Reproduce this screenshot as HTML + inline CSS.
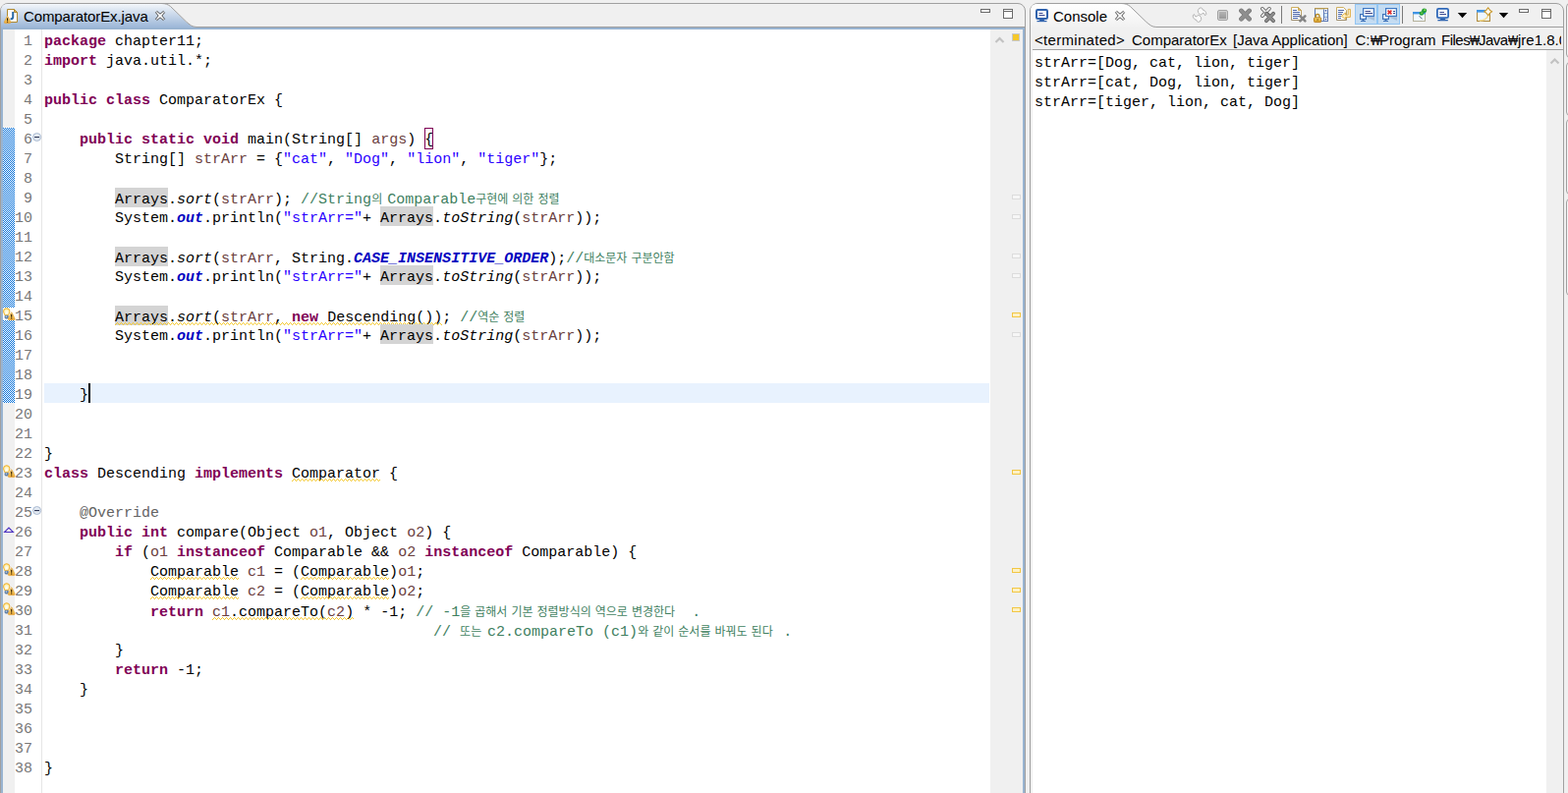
<!DOCTYPE html>
<html><head><meta charset="utf-8"><title>ComparatorEx</title>
<style>
*{box-sizing:border-box}
html,body{margin:0;padding:0}
body{width:1596px;height:807px;overflow:hidden;position:relative;background:#f0f0f0;font-family:"Liberation Sans",sans-serif}
.abs{position:absolute}
/* panels */
#edp{position:absolute;left:0;top:3px;width:1044px;height:820px;border:1px solid #a0a0a0;border-radius:8px 8px 0 0;background:#f0f0f0}
#cop{position:absolute;left:1048px;top:3px;width:544px;height:820px;border:1px solid #a0a0a0;border-radius:8px 8px 0 0;background:#f0f0f0}
#rp1{position:absolute;left:1594px;top:3px;width:20px;height:56px;border:1px solid #a0a0a0;border-radius:4px;background:#f7f7f7}
#rp2{position:absolute;left:1594px;top:63px;width:20px;height:55px;border:1px solid #a0a0a0;border-radius:4px;background:#f7f7f7}
#rp3{position:absolute;left:1594px;top:121px;width:20px;height:77px;border:1px solid #a0a0a0;border-radius:4px;background:#f7f7f7}
#rp4{position:absolute;left:1594px;top:202px;width:20px;height:99px;border:1px solid #a0a0a0;border-radius:4px;background:#f7f7f7}
#rng{background:repeating-conic-gradient(#0a72da 0% 25%, #fff 0% 50%) 1px 0/2px 2px}
/* editor */
#edarea{position:absolute;left:3px;top:30px;width:1038px;height:777px;background:#fff}
.ln,.cl{position:absolute;font-family:"Liberation Mono",monospace;font-size:15px;line-height:20px;height:20px;white-space:pre}
.ln{left:15px;width:18px;text-align:right;color:#787878}
.cl{left:45px;color:#000;z-index:1}
.k{color:#7f0055;font-weight:bold}
.s{color:#2a00ff}
.v{color:#6a3e3e}
.c{color:#3f7f5f}
.i{font-style:italic}
.f{color:#0000c0;font-style:italic;font-weight:bold}
.a{color:#646464}
.m{position:relative;display:inline-block;height:20px}
.m::before{content:"";position:absolute;left:0;right:0;top:-3px;height:20px;background:#d4d4d4;z-index:-1}
.br{position:relative;display:inline-block;height:20px}
.br::before{content:"";position:absolute;left:0;right:0;top:-3px;height:20px;border:1px solid #7f0055}
.w{position:relative;display:inline-block;height:20px}
.sq{position:absolute;left:0;top:14px}
.hg{display:inline-block;position:relative;height:20px;line-height:20px;font-family:"Liberation Sans","Noto Sans CJK KR",sans-serif;font-size:12px;word-spacing:0.7px;white-space:pre;color:#3f7f5f;overflow:visible}
.co{position:absolute;left:1053px;font-family:"Liberation Mono",monospace;font-size:15px;line-height:20px;white-space:pre;color:#000}
.ov{position:absolute;left:1030px;width:9px;height:5px;border:1px solid #dcdcdc;background:#f6f6f6}
.ov.y{border-color:#f2c744;background:#fdf1c4}
.won{transform:scaleX(0.72);transform-origin:0 0}
.tt{position:absolute;white-space:pre;color:#000}
</style></head>
<body>
<!-- panel outlines -->
<div id="edp"></div>
<div id="cop"></div>
<div id="rp1"></div><div id="rp2"></div><div id="rp3"></div><div id="rp4"></div>

<!-- editor tab strip + borders -->
<svg class="abs" style="left:0;top:0" width="1046" height="32" viewBox="0 0 1046 32">
  <defs>
    <linearGradient id="tg" x1="0" y1="0" x2="0" y2="1">
      <stop offset="0" stop-color="#f3f6fa"/><stop offset="0.35" stop-color="#d3dfee"/><stop offset="1" stop-color="#9cb7d8"/>
    </linearGradient>
  </defs>
  <path d="M1,28 L1,11 Q1,4 8,4 L164.4,4 C168.5,4 171,5 173.5,7 L189.5,22.5 C193,25.5 195.5,27.5 200,27.5 L200,28 Z" fill="url(#tg)"/>
  <path d="M164.4,3.5 C168.5,3.5 171,4.5 173.5,6.5 L189.5,22 C193,25 195.5,27.5 200,27.5 L1043,27.5" fill="none" stroke="#9e9e9e" stroke-width="1"/>
  <rect x="1" y="28" width="1042" height="2" fill="#99b4d1"/>
</svg>
<div class="abs" style="left:1px;top:28px;width:2px;height:779px;background:#99b4d1"></div>
<div class="abs" style="left:1041px;top:28px;width:2px;height:779px;background:#99b4d1"></div>

<!-- editor area -->
<div id="edarea"></div>
<div class="abs" style="left:3px;top:30px;width:12px;height:777px;background:#f0f0f0"></div>
<div class="abs" style="left:42px;top:30px;width:1px;height:777px;background:#e6e6e6"></div>
<div class="abs" style="left:1008px;top:30px;width:33px;height:777px;background:#f0f0f0"></div>
<!-- range indicator -->
<div class="abs" id="rng" style="left:3px;top:130px;width:12px;height:280px"></div>
<!-- current line -->
<div class="abs" style="left:45px;top:390px;width:962px;height:20px;background:#e8f2fe"></div>
<div class="abs" style="left:90px;top:390px;width:2px;height:20px;background:#000"></div>

<div class="ln" style="top:33px">1</div>
<div class="cl" style="top:33px"><span class="k">package</span> chapter11;</div>
<div class="ln" style="top:53px">2</div>
<div class="cl" style="top:53px"><span class="k">import</span> java.util.*;</div>
<div class="ln" style="top:73px">3</div>
<div class="ln" style="top:93px">4</div>
<div class="cl" style="top:93px"><span class="k">public</span> <span class="k">class</span> ComparatorEx {</div>
<div class="ln" style="top:113px">5</div>
<div class="ln" style="top:133px">6</div>
<div class="cl" style="top:133px">    <span class="k">public</span> <span class="k">static</span> <span class="k">void</span> main(String[] <span class="v">args</span>) <span class="br">{</span></div>
<div class="ln" style="top:153px">7</div>
<div class="cl" style="top:153px">        String[] <span class="v">strArr</span> = {<span class="s">"cat"</span>, <span class="s">"Dog"</span>, <span class="s">"lion"</span>, <span class="s">"tiger"</span>};</div>
<div class="ln" style="top:173px">8</div>
<div class="ln" style="top:193px">9</div>
<div class="cl" style="top:193px">        <span class="m">Arrays</span>.<span class="i">sort</span>(<span class="v">strArr</span>); <span class="c">//String<span class="hg" style="width:16px">의 </span>Comparable<span class="hg" style="width:92px">구현에 의한 정렬</span></span></div>
<div class="ln" style="top:213px">10</div>
<div class="cl" style="top:213px">        System.<span class="f">out</span>.println(<span class="s">"strArr="</span>+ <span class="m">Arrays</span>.<span class="i">toString</span>(<span class="v">strArr</span>));</div>
<div class="ln" style="top:233px">11</div>
<div class="ln" style="top:253px">12</div>
<div class="cl" style="top:253px">        <span class="m">Arrays</span>.<span class="i">sort</span>(<span class="v">strArr</span>, String.<span class="f">CASE_INSENSITIVE_ORDER</span>);<span class="c">//<span class="hg" style="width:100px">대소문자 구분안함</span></span></div>
<div class="ln" style="top:273px">13</div>
<div class="cl" style="top:273px">        System.<span class="f">out</span>.println(<span class="s">"strArr="</span>+ <span class="m">Arrays</span>.<span class="i">toString</span>(<span class="v">strArr</span>));</div>
<div class="ln" style="top:293px">14</div>
<div class="ln" style="top:313px">15</div>
<div class="cl" style="top:313px">        <span class="w"><span class="m">Arrays</span>.<span class="i">sort</span>(<span class="v">strArr</span>, <span class="k">new</span> Descending())<svg class="sq" width="333" height="3"><rect width="333" height="3" fill="url(#sqp)"/></svg></span>; <span class="c">//<span class="hg" style="width:52px">역순 정렬</span></span></div>
<div class="ln" style="top:333px">16</div>
<div class="cl" style="top:333px">        System.<span class="f">out</span>.println(<span class="s">"strArr="</span>+ <span class="m">Arrays</span>.<span class="i">toString</span>(<span class="v">strArr</span>));</div>
<div class="ln" style="top:353px">17</div>
<div class="ln" style="top:373px">18</div>
<div class="ln" style="top:393px">19</div>
<div class="cl" style="top:393px">    }</div>
<div class="ln" style="top:413px">20</div>
<div class="ln" style="top:433px">21</div>
<div class="ln" style="top:453px">22</div>
<div class="cl" style="top:453px">}</div>
<div class="ln" style="top:473px">23</div>
<div class="cl" style="top:473px"><span class="k">class</span> Descending <span class="k">implements</span> <span class="w">Comparator<svg class="sq" width="90" height="3"><rect width="90" height="3" fill="url(#sqp)"/></svg></span> {</div>
<div class="ln" style="top:493px">24</div>
<div class="ln" style="top:513px">25</div>
<div class="cl" style="top:513px">    <span class="a">@Override</span></div>
<div class="ln" style="top:533px">26</div>
<div class="cl" style="top:533px">    <span class="k">public</span> <span class="k">int</span> compare(Object <span class="v">o1</span>, Object <span class="v">o2</span>) {</div>
<div class="ln" style="top:553px">27</div>
<div class="cl" style="top:553px">        <span class="k">if</span> (<span class="v">o1</span> <span class="k">instanceof</span> Comparable &amp;&amp; <span class="v">o2</span> <span class="k">instanceof</span> Comparable) {</div>
<div class="ln" style="top:573px">28</div>
<div class="cl" style="top:573px">            <span class="w">Comparable<svg class="sq" width="90" height="3"><rect width="90" height="3" fill="url(#sqp)"/></svg></span> <span class="v">c1</span> = (<span class="w">Comparable<svg class="sq" width="90" height="3"><rect width="90" height="3" fill="url(#sqp)"/></svg></span>)<span class="v">o1</span>;</div>
<div class="ln" style="top:593px">29</div>
<div class="cl" style="top:593px">            <span class="w">Comparable<svg class="sq" width="90" height="3"><rect width="90" height="3" fill="url(#sqp)"/></svg></span> <span class="v">c2</span> = (<span class="w">Comparable<svg class="sq" width="90" height="3"><rect width="90" height="3" fill="url(#sqp)"/></svg></span>)<span class="v">o2</span>;</div>
<div class="ln" style="top:613px">30</div>
<div class="cl" style="top:613px">            <span class="k">return</span> <span class="w"><span class="v">c1</span>.compareTo(<span class="v">c2</span>)<svg class="sq" width="144" height="3"><rect width="144" height="3" fill="url(#sqp)"/></svg></span> * -1; <span class="c">// -1<span class="hg" style="width:236px">을 곱해서 기본 정렬방식의 역으로 변경한다</span>.</span></div>
<div class="ln" style="top:633px">31</div>
<div class="cl" style="top:633px">                                            <span class="c">// <span class="hg" style="width:28px">또는 </span>c2.compareTo (c1)<span class="hg" style="width:148px">와 같이 순서를 바꿔도 된다</span>.</span></div>
<div class="ln" style="top:653px">32</div>
<div class="cl" style="top:653px">        }</div>
<div class="ln" style="top:673px">33</div>
<div class="cl" style="top:673px">        <span class="k">return</span> -1;</div>
<div class="ln" style="top:693px">34</div>
<div class="cl" style="top:693px">    }</div>
<div class="ln" style="top:713px">35</div>
<div class="ln" style="top:733px">36</div>
<div class="ln" style="top:753px">37</div>
<div class="ln" style="top:773px">38</div>
<div class="cl" style="top:773px">}</div>
<div class="ov" style="top:198px"></div>
<div class="ov" style="top:218px"></div>
<div class="ov" style="top:258px"></div>
<div class="ov" style="top:278px"></div>
<div class="ov" style="top:338px"></div>
<div class="ov y" style="top:318px"></div>
<div class="ov y" style="top:478px"></div>
<div class="ov y" style="top:578px"></div>
<div class="ov y" style="top:598px"></div>
<div class="ov y" style="top:618px"></div>

<!-- ===== editor tab contents ===== -->
<svg class="abs" style="left:3px;top:8px" width="17" height="17" viewBox="0 0 17 17">
  <defs>
    <linearGradient id="wg" x1="0" y1="0" x2="0" y2="1"><stop offset="0" stop-color="#fde9a8"/><stop offset="0.6" stop-color="#f7c95a"/><stop offset="1" stop-color="#e8a030"/></linearGradient>
  </defs>
  <path d="M4.5,1.5 H11.5 L14.5,4.5 V14.5 H4.5 Z" fill="#fbfcff" stroke="#b08a30"/>
  <path d="M11.5,1.5 V4.5 H14.5 Z" fill="#e0b860" stroke="#b08a30" stroke-linejoin="round"/>
  <path d="M10.2,4 V9.2 Q10.2,11.6 7.6,11.2" fill="none" stroke="#2a6aa6" stroke-width="2"/>
  <path d="M4.2,8.7 Q4.6,8 5,8.7 L7.7,14.2 Q8.1,15.6 6.8,15.6 H2.4 Q1.1,15.6 1.5,14.2 Z" fill="url(#wg)" stroke="#e3a33a" stroke-width="0.8"/>
  <rect x="4.05" y="10.3" width="1.1" height="2.7" fill="#2a1a08"/><rect x="4.05" y="13.6" width="1.1" height="1.1" fill="#2a1a08"/>
</svg>
<div class="tt" id="t1" style="left:24px;top:7px;font-size:15px;line-height:20px;letter-spacing:-0.1px">ComparatorEx.java</div>
<svg class="abs" style="left:157px;top:10px" width="12" height="12" viewBox="-1 -1 12 12">
  <path d="M0.5,1.8 L1.8,0.5 L5,3.2 L8.2,0.5 L9.5,1.8 L6.8,5 L9.5,8.2 L8.2,9.5 L5,6.8 L1.8,9.5 L0.5,8.2 L3.2,5 Z" fill="#fff" stroke="#4c4c4c" stroke-width="1" stroke-linejoin="round"/>
</svg>
<!-- editor min / max -->
<svg class="abs" style="left:997px;top:8px" width="36" height="12" viewBox="0 0 36 12">
  <rect x="1.5" y="1.5" width="9" height="3" fill="#fff" stroke="#6a6a6a"/>
  <rect x="24.5" y="1.5" width="9" height="9" fill="#fff" stroke="#6a6a6a"/>
  <rect x="24.5" y="1.5" width="9" height="2" fill="#fff" stroke="#6a6a6a"/>
</svg>
<!-- editor scrollbar chevron + overview square -->
<svg class="abs" style="left:1008px;top:30px" width="33" height="20" viewBox="0 0 33 20">
  <path d="M5.5,13 L9.5,9 L13.5,13" fill="none" stroke="#c2c2c2" stroke-width="2.2"/>
  <rect x="22.5" y="4.5" width="7" height="7" fill="#f5c82a" stroke="#c8c8c8"/>
</svg>
<!-- ===== console tab strip ===== -->
<svg class="abs" style="left:1048px;top:0" width="548" height="52" viewBox="1048 0 548 52">
  <defs>
    <linearGradient id="cg" x1="0" y1="0" x2="0" y2="1"><stop offset="0" stop-color="#ffffff"/><stop offset="1" stop-color="#f1f1f1"/></linearGradient>
  </defs>
  <path d="M1049,28 L1049,11 Q1049,4 1056,4 L1141.3,4 C1145.4,4 1147.9,5 1150.4,7 L1166.4,22.5 C1169.9,25.5 1172.4,27.5 1176.9,27.5 L1176.9,28 Z" fill="url(#cg)"/>
  <path d="M1141.3,3.5 C1145.4,3.5 1147.9,4.5 1150.4,6.5 L1166.4,22 C1169.9,25 1172.4,27.5 1176.9,27.5 L1591,27.5" fill="none" stroke="#9e9e9e" stroke-width="1"/>
  <rect x="1051" y="50" width="540" height="1" fill="#a0a0a0"/>
</svg>
<div class="abs" style="left:1051px;top:51px;width:523px;height:756px;background:#fff"></div>
<div class="abs" style="left:1574px;top:51px;width:17px;height:756px;background:#f0f0f0"></div>
<svg class="abs" style="left:1574px;top:51px" width="17" height="20" viewBox="0 0 17 20">
  <path d="M4.5,13.5 L8.5,9.5 L12.5,13.5" fill="none" stroke="#c2c2c2" stroke-width="2.2"/>
</svg>
<!-- console icon -->
<svg class="abs" style="left:1053px;top:8px" width="16" height="16" viewBox="0 0 16 16">
  <rect x="2" y="2" width="11" height="9" rx="1.2" fill="#fafdff" stroke="#2f62ad" stroke-width="2"/>
  <rect x="4.5" y="5" width="4" height="1" fill="#3a4890"/><rect x="4.5" y="7" width="6" height="1" fill="#3a4890"/>
  <path d="M5.5,12 H9.5 L10.5,13 H4.5 Z" fill="#2f62ad"/><rect x="2.5" y="13" width="10" height="1.2" fill="#2f62ad"/>
</svg>
<div class="tt" id="t2" style="left:1072px;top:7px;font-size:15px;line-height:20px">Console</div>
<svg class="abs" style="left:1134px;top:10px" width="12" height="12" viewBox="-1 -1 12 12">
  <path d="M0.5,1.8 L1.8,0.5 L5,3.2 L8.2,0.5 L9.5,1.8 L6.8,5 L9.5,8.2 L8.2,9.5 L5,6.8 L1.8,9.5 L0.5,8.2 L3.2,5 Z" fill="#fff" stroke="#4c4c4c" stroke-width="1" stroke-linejoin="round"/>
</svg>
<div class="abs" id="t3" style="left:1051px;top:30px;width:538px;height:20px;overflow:hidden"><span class="tt" id="g0" style="left:2.0px;top:1px;font-size:15px;line-height:20px;letter-spacing:0.3px">&lt;terminated&gt;</span><span class="tt" id="g1" style="left:101.0px;top:1px;font-size:15px;line-height:20px">ComparatorEx</span><span class="tt" id="g2" style="left:204.0px;top:1px;font-size:15px;line-height:20px">[Java Application]</span><span class="tt" id="g3" style="left:328.4px;top:1px;font-size:15px;line-height:20px">C:</span><span class="tt won" id="g4" style="left:343.6px;top:1px;font-size:15px;line-height:20px">&#8361;</span><span class="tt" id="g5" style="left:353.0px;top:1px;font-size:15px;line-height:20px">Program</span><span class="tt" id="g6" style="left:416.0px;top:1px;font-size:15px;line-height:20px;letter-spacing:-0.5px">Files</span><span class="tt won" id="g7" style="left:444.7px;top:1px;font-size:15px;line-height:20px">&#8361;</span><span class="tt" id="g8" style="left:454.0px;top:1px;font-size:15px;line-height:20px;letter-spacing:-0.5px">Java</span><span class="tt won" id="g9" style="left:484.3px;top:1px;font-size:15px;line-height:20px">&#8361;</span><span class="tt" id="g10" style="left:494.0px;top:1px;font-size:15px;line-height:20px">jre1.8.0_121</span></div>
<div class="co" style="top:55px">strArr=[Dog, cat, lion, tiger]</div>
<div class="co" style="top:75px">strArr=[cat, Dog, lion, tiger]</div>
<div class="co" style="top:95px">strArr=[tiger, lion, cat, Dog]</div>
<!-- ===== console toolbar ===== -->
<svg class="abs" style="left:1208px;top:4px" width="384" height="23" viewBox="1208 4 384 23">
  <defs>
    <linearGradient id="sg" x1="0" y1="0" x2="0" y2="1"><stop offset="0" stop-color="#b4b4b4"/><stop offset="1" stop-color="#989898"/></linearGradient>
    <linearGradient id="gold" x1="0" y1="0" x2="0" y2="1"><stop offset="0" stop-color="#f2d878"/><stop offset="1" stop-color="#d49a20"/></linearGradient>
    <linearGradient id="docb" x1="0" y1="0" x2="0" y2="1"><stop offset="0" stop-color="#d0b060"/><stop offset="1" stop-color="#a09070"/></linearGradient>
    <linearGradient id="shd" x1="0" y1="0" x2="1" y2="1"><stop offset="0" stop-color="#7d9cc0"/><stop offset="1" stop-color="#c4dcf2" stop-opacity="0"/></linearGradient>
  </defs>
  <!-- sync (disabled) -->
  <g fill="#fafafa" stroke="#b4b4b4" stroke-width="1" stroke-linejoin="round">
    <path id="sy" d="M1219.3,10.6 L1220.6,8.4 L1222.5,7.9 L1223.6,8.5 L1224,9.8 L1226,10.6 L1227.5,12.5 L1227.8,14.5 L1226.6,15.8 L1225.4,13.6 L1223.9,13.5 L1222.6,15 L1221.2,14.7 L1219.6,12.7 Z"/>
    <path d="M1222.7,19.7 L1221.4,21.9 L1219.5,22.4 L1218.4,21.8 L1218,20.5 L1216,19.7 L1214.5,17.8 L1214.2,15.8 L1215.4,14.5 L1216.6,16.7 L1218.1,16.8 L1219.4,15.3 L1220.8,15.6 L1222.4,17.6 Z"/>
  </g>
  <!-- stop -->
  <rect x="1239.5" y="10.5" width="10" height="10" rx="1.5" fill="#d2d2d2" stroke="#a2a2a2"/>
  <rect x="1241" y="12" width="7" height="7" fill="url(#sg)"/>
  <!-- remove X -->
  <g stroke-linecap="round">
    <path d="M1263.4,10.9 L1271.6,19.3 M1271.6,10.9 L1263.4,19.3" stroke="#747474" stroke-width="4.6"/>
    <path d="M1263.4,10.9 L1271.6,19.3 M1271.6,10.9 L1263.4,19.3" stroke="#8e8e8e" stroke-width="3.4"/>
    <!-- remove all XX -->
    <path d="M1284.8,8.8 L1292,16.2 M1292,8.8 L1284.8,16.2" stroke="#5c5c5c" stroke-width="3.6"/>
    <path d="M1284.8,8.8 L1292,16.2 M1292,8.8 L1284.8,16.2" stroke="#e6e6e6" stroke-width="2"/>
    <path d="M1288.9,13.8 L1296.1,21.2 M1296.1,13.8 L1288.9,21.2" stroke="#585858" stroke-width="3.8"/>
    <path d="M1288.9,13.8 L1296.1,21.2 M1296.1,13.8 L1288.9,21.2" stroke="#8c8c8c" stroke-width="2.6"/>
  </g>
  <!-- separators -->
  <rect x="1304" y="6" width="1" height="18" fill="#7a7a7a"/>
  <rect x="1427" y="6" width="1" height="18" fill="#7a7a7a"/>
  <!-- clear console -->
  <path d="M1314.5,7.5 H1321.5 L1324.5,10.5 V20.5 H1314.5 Z" fill="#f6f9ff" stroke="url(#docb)"/>
  <path d="M1321.5,7.5 V10.5 H1324.5 Z" fill="#e4c06a" stroke="#c8a85a" stroke-linejoin="round"/>
  <g fill="#4a64a8"><rect x="1316" y="10" width="4" height="1"/><rect x="1316" y="12" width="7" height="1"/><rect x="1316" y="14" width="7" height="1"/><rect x="1316" y="16" width="7" height="1"/><rect x="1316" y="18" width="5" height="1"/></g>
  <path d="M1323.4,16.4 L1328.4,21.4 M1328.4,16.4 L1323.4,21.4" stroke="#858585" stroke-width="2.6" stroke-linecap="round"/>
  <!-- scroll lock -->
  <rect x="1338.5" y="8.5" width="13" height="13" fill="#f0f9ff" stroke="#5a78b4"/>
  <rect x="1338" y="8" width="14" height="1.4" fill="#b89a50"/>
  <rect x="1347" y="9.4" width="1" height="12" fill="#5a78b4"/>
  <rect x="1348" y="9.4" width="3" height="3.6" fill="#fff"/><rect x="1348" y="18" width="3" height="3" fill="#fff"/>
  <rect x="1348" y="13" width="3" height="0.8" fill="#5a78b4"/><rect x="1348" y="17.2" width="3" height="0.8" fill="#5a78b4"/>
  <rect x="1348" y="13.8" width="3" height="3.4" fill="#cfe6fa"/>
  <circle cx="1349.5" cy="10.9" r="0.8" fill="#2a4aa0"/><circle cx="1349.5" cy="19.6" r="0.8" fill="#2a4aa0"/>
  <path d="M1339.2,18 V16.6 A1.9,2.1 0 0 1 1343,16.6 V18" fill="none" stroke="#b88a20" stroke-width="1.3"/>
  <rect x="1337.5" y="17.8" width="7.2" height="4.8" rx="1" fill="url(#gold)" stroke="#b87c18" stroke-width="0.9"/>
  <rect x="1340.7" y="19.2" width="0.9" height="1.8" fill="#8a5a10"/>
  <!-- word wrap -->
  <path d="M1360.5,7.5 H1367.5 L1370.5,10.5 V20.5 H1360.5 Z" fill="#f6f9ff" stroke="url(#docb)"/>
  <g fill="#5068a8"><rect x="1362" y="10" width="6" height="1"/><rect x="1362" y="12" width="5" height="1"/><rect x="1362" y="14" width="4" height="1"/><rect x="1362" y="16" width="3" height="1"/><rect x="1362" y="18" width="3" height="1"/></g>
  <path d="M1372.2,9.4 H1374.4 V17.4 H1369.6 V19.6 L1365.4,16.3 L1369.6,13 V15.2 H1372.2 Z" fill="#fdf0c8" stroke="#dca838" stroke-width="0.9" stroke-linejoin="round"/>
  <!-- toggled buttons -->
  <rect x="1379.5" y="4.5" width="45" height="20" fill="#c4dcf2" stroke="#92c6f4"/>
  <rect x="1401" y="4.5" width="2" height="20" fill="#92c6f4"/>
  <g id="mon2">
    <path d="M1390,17 L1399,17 L1399,21 Z" fill="#9fb8d4" opacity="0.8"/>
    <rect x="1384.6" y="14.6" width="5.8" height="4.8" fill="#f4f8fc" stroke="#3f72b8" stroke-width="1.2"/>
    <rect x="1386.5" y="20" width="2" height="1" fill="#3f72b8"/><rect x="1385" y="21" width="5" height="1" fill="#3f72b8"/>
    <rect x="1387.6" y="8.6" width="10.8" height="7.8" fill="#fafdff" stroke="#3f78c4" stroke-width="1.2"/>
  </g>
  <rect x="1389.5" y="11" width="5.5" height="1" fill="#3a4488"/><rect x="1389.5" y="13" width="7.5" height="1" fill="#3a4488"/>
  <g transform="translate(23,0)">
    <path d="M1390,17 L1399,17 L1399,21 Z" fill="#9fb8d4" opacity="0.8"/>
    <rect x="1384.6" y="14.6" width="5.8" height="4.8" fill="#f4f8fc" stroke="#3f72b8" stroke-width="1.2"/>
    <rect x="1386.5" y="20" width="2" height="1" fill="#3f72b8"/><rect x="1385" y="21" width="5" height="1" fill="#3f72b8"/>
    <rect x="1387.6" y="8.6" width="10.8" height="7.8" fill="#fafdff" stroke="#3f78c4" stroke-width="1.2"/>
    <path d="M1389.6,10.6 L1393.4,14.4 M1393.4,10.6 L1389.6,14.4" stroke="#e03030" stroke-width="1.7"/>
    <rect x="1395" y="11" width="2" height="1" fill="#3a4488"/><rect x="1395" y="13" width="2" height="1" fill="#3a4488"/>
  </g>
  <!-- pin console -->
  <rect x="1438.5" y="12.5" width="12" height="9" fill="#f2f9ff" stroke="#b4b09a"/>
  <rect x="1438" y="12" width="13" height="2.4" fill="#3f94e4"/>
  <path d="M1444.6,16.2 L1447.6,19.4" stroke="#56648c" stroke-width="1"/>
  <ellipse cx="1446.9" cy="13.7" rx="2.3" ry="2.1" fill="#25a03a"/>
  <ellipse cx="1449.7" cy="10.8" rx="2.5" ry="2.4" fill="#25a03a"/>
  <path d="M1447.8,12.2 L1448.8,11.2" stroke="#25a03a" stroke-width="3"/>
  <circle cx="1450.2" cy="10.2" r="0.9" fill="#8fd94e"/><circle cx="1447.2" cy="13.2" r="0.8" fill="#8fd94e"/>
  <!-- display selected console -->
  <rect x="1462.9" y="8.9" width="11.2" height="9.2" rx="1.4" fill="#fafdff" stroke="#3068b8" stroke-width="1.8"/>
  <rect x="1465.4" y="12" width="4.6" height="1" fill="#3a4890"/><rect x="1465.4" y="14" width="6.6" height="1" fill="#3a4890"/>
  <path d="M1466.4,19 H1470.6 L1471.6,20 H1465.4 Z" fill="#2f64b0"/><rect x="1463.4" y="20" width="10.4" height="1.3" fill="#2f64b0"/>
  <path d="M1483.8,13 H1493.2 L1488.5,18.2 Z" fill="#000"/>
  <!-- new console -->
  <rect x="1503.5" y="10.5" width="13" height="11" fill="#eef7ff" stroke="#b08a3a"/>
  <rect x="1503" y="10" width="14" height="2.6" fill="#3f94e4"/>
  <path d="M1506,21 Q1514,20.6 1515.6,14" fill="none" stroke="#f4dc90" stroke-width="1.4"/>
  <path d="M1514.7,7.7 Q1516,10.4 1518.7,11.7 Q1516,13 1514.7,15.7 Q1513.4,13 1510.7,11.7 Q1513.4,10.4 1514.7,7.7 Z" fill="#fffdf4" stroke="#c8982c" stroke-width="1.1" stroke-linejoin="round"/>
  <path d="M1525.8,13 H1535.2 L1530.5,18.2 Z" fill="#000"/>
  <!-- min / max -->
  <rect x="1546.5" y="9.5" width="9" height="3" fill="#fff" stroke="#6a6a6a"/>
  <rect x="1569.5" y="9.5" width="9" height="9" fill="#fff" stroke="#6a6a6a"/>
  <rect x="1569.5" y="9.5" width="9" height="2" fill="#fff" stroke="#6a6a6a"/>
</svg>
<svg width="0" height="0" style="position:absolute"><defs>
<radialGradient id="bg" cx="0.5" cy="0.6" r="0.6"><stop offset="0" stop-color="#ffffff"/><stop offset="0.6" stop-color="#fdf2b8"/><stop offset="1" stop-color="#f9d870"/></radialGradient>
<linearGradient id="wg2" x1="0" y1="0" x2="0" y2="1"><stop offset="0" stop-color="#fde9a8"/><stop offset="0.6" stop-color="#f7c95a"/><stop offset="1" stop-color="#e8a030"/></linearGradient>
<pattern id="sqp" width="4" height="3" patternUnits="userSpaceOnUse"><g fill="#f4c82d" shape-rendering="crispEdges"><rect x="0" y="2" width="1" height="1"/><rect x="1" y="1" width="1" height="1"/><rect x="2" y="0" width="1" height="1"/><rect x="3" y="1" width="1" height="1"/></g></pattern>
</defs></svg>
<div class="abs" style="left:3px;top:313px;width:12px;height:13px;background:#fff"></div><svg class="abs" style="left:3px;top:313px" width="13" height="14" viewBox="0 0 13 14">
<path d="M3.7,0.7 A3.2,3.2 0 0 1 6.9,3.9 C6.9,5.6 5.6,6.4 5.5,7.8 H1.9 C1.8,6.4 0.5,5.6 0.5,3.9 A3.2,3.2 0 0 1 3.7,0.7 Z" fill="url(#bg)" stroke="#f0b230" stroke-width="1"/>
<rect x="1.6" y="7.8" width="4.2" height="3.6" rx="1.4" fill="#5f7fa6"/><rect x="2.6" y="8.4" width="1.6" height="1.4" rx="0.7" fill="#dfe8f2"/>
<path d="M8.3,5.2 Q8.7,4.5 9.1,5.2 L12,11.2 Q12.4,12.6 11,12.6 H6.4 Q5,12.6 5.4,11.2 Z" fill="url(#wg2)" stroke="#e3a33a" stroke-width="0.8"/>
<rect x="8.1" y="6.8" width="1.2" height="3" fill="#3a2406"/><rect x="8.1" y="10.4" width="1.2" height="1.2" fill="#3a2406"/>
</svg>
<svg class="abs" style="left:3px;top:473px" width="13" height="14" viewBox="0 0 13 14">
<path d="M3.7,0.7 A3.2,3.2 0 0 1 6.9,3.9 C6.9,5.6 5.6,6.4 5.5,7.8 H1.9 C1.8,6.4 0.5,5.6 0.5,3.9 A3.2,3.2 0 0 1 3.7,0.7 Z" fill="url(#bg)" stroke="#f0b230" stroke-width="1"/>
<rect x="1.6" y="7.8" width="4.2" height="3.6" rx="1.4" fill="#5f7fa6"/><rect x="2.6" y="8.4" width="1.6" height="1.4" rx="0.7" fill="#dfe8f2"/>
<path d="M8.3,5.2 Q8.7,4.5 9.1,5.2 L12,11.2 Q12.4,12.6 11,12.6 H6.4 Q5,12.6 5.4,11.2 Z" fill="url(#wg2)" stroke="#e3a33a" stroke-width="0.8"/>
<rect x="8.1" y="6.8" width="1.2" height="3" fill="#3a2406"/><rect x="8.1" y="10.4" width="1.2" height="1.2" fill="#3a2406"/>
</svg>
<svg class="abs" style="left:3px;top:573px" width="13" height="14" viewBox="0 0 13 14">
<path d="M3.7,0.7 A3.2,3.2 0 0 1 6.9,3.9 C6.9,5.6 5.6,6.4 5.5,7.8 H1.9 C1.8,6.4 0.5,5.6 0.5,3.9 A3.2,3.2 0 0 1 3.7,0.7 Z" fill="url(#bg)" stroke="#f0b230" stroke-width="1"/>
<rect x="1.6" y="7.8" width="4.2" height="3.6" rx="1.4" fill="#5f7fa6"/><rect x="2.6" y="8.4" width="1.6" height="1.4" rx="0.7" fill="#dfe8f2"/>
<path d="M8.3,5.2 Q8.7,4.5 9.1,5.2 L12,11.2 Q12.4,12.6 11,12.6 H6.4 Q5,12.6 5.4,11.2 Z" fill="url(#wg2)" stroke="#e3a33a" stroke-width="0.8"/>
<rect x="8.1" y="6.8" width="1.2" height="3" fill="#3a2406"/><rect x="8.1" y="10.4" width="1.2" height="1.2" fill="#3a2406"/>
</svg>
<svg class="abs" style="left:3px;top:593px" width="13" height="14" viewBox="0 0 13 14">
<path d="M3.7,0.7 A3.2,3.2 0 0 1 6.9,3.9 C6.9,5.6 5.6,6.4 5.5,7.8 H1.9 C1.8,6.4 0.5,5.6 0.5,3.9 A3.2,3.2 0 0 1 3.7,0.7 Z" fill="url(#bg)" stroke="#f0b230" stroke-width="1"/>
<rect x="1.6" y="7.8" width="4.2" height="3.6" rx="1.4" fill="#5f7fa6"/><rect x="2.6" y="8.4" width="1.6" height="1.4" rx="0.7" fill="#dfe8f2"/>
<path d="M8.3,5.2 Q8.7,4.5 9.1,5.2 L12,11.2 Q12.4,12.6 11,12.6 H6.4 Q5,12.6 5.4,11.2 Z" fill="url(#wg2)" stroke="#e3a33a" stroke-width="0.8"/>
<rect x="8.1" y="6.8" width="1.2" height="3" fill="#3a2406"/><rect x="8.1" y="10.4" width="1.2" height="1.2" fill="#3a2406"/>
</svg>
<svg class="abs" style="left:3px;top:613px" width="13" height="14" viewBox="0 0 13 14">
<path d="M3.7,0.7 A3.2,3.2 0 0 1 6.9,3.9 C6.9,5.6 5.6,6.4 5.5,7.8 H1.9 C1.8,6.4 0.5,5.6 0.5,3.9 A3.2,3.2 0 0 1 3.7,0.7 Z" fill="url(#bg)" stroke="#f0b230" stroke-width="1"/>
<rect x="1.6" y="7.8" width="4.2" height="3.6" rx="1.4" fill="#5f7fa6"/><rect x="2.6" y="8.4" width="1.6" height="1.4" rx="0.7" fill="#dfe8f2"/>
<path d="M8.3,5.2 Q8.7,4.5 9.1,5.2 L12,11.2 Q12.4,12.6 11,12.6 H6.4 Q5,12.6 5.4,11.2 Z" fill="url(#wg2)" stroke="#e3a33a" stroke-width="0.8"/>
<rect x="8.1" y="6.8" width="1.2" height="3" fill="#3a2406"/><rect x="8.1" y="10.4" width="1.2" height="1.2" fill="#3a2406"/>
</svg>
<svg class="abs" style="left:33px;top:135px" width="10" height="10" viewBox="0 0 10 10"><circle cx="4.6" cy="4.5" r="4" fill="#e4ebf3" stroke="#a9b9d0"/><rect x="2.1" y="4" width="5" height="1.1" fill="#2c3454"/></svg>
<svg class="abs" style="left:33px;top:515px" width="10" height="10" viewBox="0 0 10 10"><circle cx="4.6" cy="4.5" r="4" fill="#e4ebf3" stroke="#a9b9d0"/><rect x="2.1" y="4" width="5" height="1.1" fill="#2c3454"/></svg>
<svg class="abs" style="left:3px;top:535px" width="12" height="8" viewBox="0 0 12 8"><path d="M1.6,6.5 L6,2 L10.4,6.5 Z" fill="none" stroke="#4a2fc0" stroke-width="1.1" stroke-linejoin="miter"/></svg>

</body></html>
